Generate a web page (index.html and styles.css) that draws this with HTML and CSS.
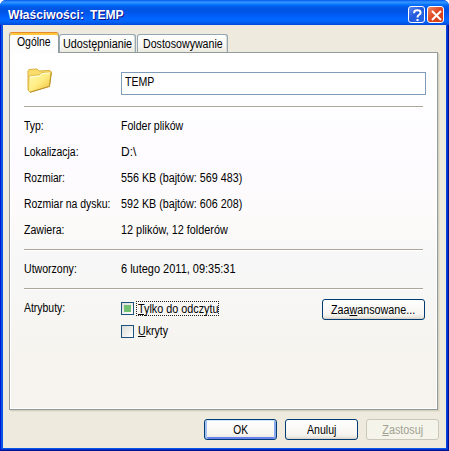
FILE: index.html
```html
<!DOCTYPE html>
<html lang="pl">
<head>
<meta charset="utf-8">
<title>Właściwości: TEMP</title>
<link rel="stylesheet" href="styles.css">
</head>
<body>
<div class="window">
  <header class="titlebar">
    <h1><span class="w-title">Właściwości: TEMP</span></h1>
    <button class="cap help" aria-label="Pomoc"><svg width="17" height="17" viewBox="0 0 17 17"><path d="M5.2 6.2V5.3Q5.2 3.3 8.3 3.3Q11.6 3.3 11.6 5.7Q11.6 7 9.8 8Q8.5 8.8 8.5 10.4M8.5 12V14" /></svg></button>
    <button class="cap close" aria-label="Zamknij"><svg width="17" height="17" viewBox="0 0 17 17"><path d="M4 4L13 13M13 4L4 13" /></svg></button>
  </header>
  <main class="client">
    <nav class="tabs">
      <div class="tab active"><span class="t-ogolne">Ogólne</span></div>
      <div class="tab share"><span class="t-share">Udostępnianie</span></div>
      <div class="tab custom"><span class="t-custom">Dostosowywanie</span></div>
    </nav>
    <section class="panel">
      <div class="name-row">
        <svg class="folder" width="26" height="26" viewBox="0 0 26 26">
          <defs><linearGradient id="front" x1="0" y1="0" x2="1" y2="1"><stop offset="0" stop-color="#fffbb5"/><stop offset=".5" stop-color="#ffed83"/><stop offset="1" stop-color="#edbb37"/></linearGradient></defs>
          <path d="M1 3L2 1.500L10 1L12 3L23 2.500L24.500 4L22 18L3 24L1 22Z" fill="#f9dd6c" stroke="#dcb03a"/>
          <path d="M2 9Q2 7.500 4 7.500L12 7L15 4.500L24 4L22.500 18L3.500 24L1.500 23Z" fill="url(#front)" stroke="#deb340" stroke-width=".8"/>
          <path d="M3 9L12.500 8L15.500 5.500L23 5" fill="none" stroke="#fffde0"/>
          <path d="M3 24.300L22.500 18.500L24.300 5" fill="none" stroke="#b8912c"/>
        </svg>
        <div class="field"><span class="w-temp">TEMP</span></div>
      </div>
      <hr>
      <dl class="facts">
        <dt><span class="w-typ">Typ:</span></dt><dd><span class="w-folder">Folder plików</span></dd>
        <dt><span class="w-lok">Lokalizacja:</span></dt><dd><span class="w-d">D:\</span></dd>
        <dt><span class="w-roz">Rozmiar:</span></dt><dd><span class="w-size">556 KB (bajtów: 569 483)</span></dd>
        <dt><span class="w-disk">Rozmiar na dysku:</span></dt><dd><span class="w-size">592 KB (bajtów: 606 208)</span></dd>
        <dt><span class="w-zaw">Zawiera:</span></dt><dd><span class="w-count">12 plików, 12 folderów</span></dd>
      </dl>
      <hr>
      <dl class="facts single">
        <dt><span class="w-utw">Utworzony:</span></dt><dd><span class="w-date">6 lutego 2011, 09:35:31</span></dd>
      </dl>
      <hr>
      <div class="attributes">
        <div class="attr-label"><span class="w-atr">Atrybuty:</span></div>
        <div class="checks">
          <label class="check"><i class="box mixed"></i><b class="caption focus"><span class="w-read"><u>T</u>ylko do odczytu</span></b></label>
          <label class="check"><i class="box"></i><b class="caption"><span class="w-hid"><u>U</u>kryty</span></b></label>
        </div>
        <button class="btn advanced"><span class="w-adv">Zaa<u>w</u>ansowane...</span></button>
      </div>
    </section>
    <footer class="actions">
      <button class="btn default"><span class="w-ok">OK</span></button>
      <button class="btn"><span class="w-cancel">Anuluj</span></button>
      <button class="btn disabled" disabled><span class="w-apply"><u>Z</u>astosuj</span></button>
    </footer>
  </main>
</div>
</body>
</html>
```

FILE: styles.css
```css
* { box-sizing: border-box; }
body { margin: 0; background: #fff; overflow: hidden; font: 12px/14px "Liberation Sans", Arial, sans-serif; color: #000; }
button { font: inherit; color: inherit; padding: 0; margin: 0; }
span { display: inline-block; white-space: nowrap; transform-origin: 0 50%; }
u { text-decoration: underline; text-underline-offset: 1px; text-decoration-thickness: 1px; }
.window { position: relative; width: 449px; height: 451px; display: flex; flex-direction: column; background: #0831d9; border-radius: 6px 6px 0 0; overflow: hidden; }
.window::after { content: ""; position: absolute; inset: 25px 0 0; pointer-events: none; box-shadow: inset 1px 0 #0019cf, inset -1px -1px #00138c, inset -2px -2px #0030c8, inset 3px -3px #0855e8, inset -3px 0 #0845e0; }
.titlebar { height: 25px; flex: none; display: flex; align-items: center; padding: 3px 5px 0 8px; background: linear-gradient(#0058ee 0, #3593ff 2px, #288eff 3px, #127dff 4px, #036ffc 5px, #0262ee 6px, #0057e5 8px, #0054e3 11px, #005bf5 15px, #0266fe 19px, #0066ff 21px, #005be8 23px, #0048dc 25px); }
h1 { margin: 0 auto 0 0; color: #fff; font: bold 13px/17px "Liberation Sans", Arial, sans-serif; text-shadow: 1px 1px #0f1089; white-space: nowrap; word-spacing: 3px; }
.cap { width: 17px; height: 17px; margin-left: 2px; border: 1px solid #fff; border-radius: 3px; display: grid; place-items: center; overflow: hidden; }
.cap svg { display: block; flex: none; fill: none; stroke: #fff; stroke-width: 2; }
.help { background: linear-gradient(135deg, #5c8aef, #2459dc 45%, #2467e8); }
.close { background: linear-gradient(135deg, #ee8a68, #e04a24 45%, #d03c14); }
.client { width: 449px; height: 426px; padding: 7px 8px 0 6px; border: solid #0831d9; border-width: 0 3px 3px; background: #eeeadd; }
.tabs { height: 20px; display: flex; align-items: flex-end; position: relative; }
.tab { height: 18px; border: 1px solid #91a7b4; border-bottom: 0; border-radius: 3px 3px 0 0; background: linear-gradient(#fff, #f7f6f2 65%, #ece9df); padding: 2px 0 0 3px; box-shadow: inset -1px 0 #dedbd0; }
.tab.active { width: 50px; height: 21px; margin-bottom: -1px; background: #fdfdfe; border: 1px solid #919b9c; border-top: 1px solid #e68b2c; border-bottom: 0; padding: 2px 0 0 7px; box-shadow: inset 0 2px #ffc73c; }
.share { width: 77px; }
.custom { width: 91px; margin-left: 1px; padding-left: 5px; }
.panel { width: 429px; height: 358px; border: 1px solid #919b9c; background: linear-gradient(#fff, #fdfbff 30%, #fcfaf9 48%, #f7f7f7 58%, #f7f7f6 66%, #f6f4ef 83%, #f6f3ee); box-shadow: inset 0 0 0 1px #fff, 1px 1px #d6d2c2, 2px 2px #e4dfcf; padding: 0 11px 0 14px; }
.name-row { height: 53px; padding-top: 14px; display: flex; }
.folder { margin: 1px 0 0 3px; flex: none; }
.field { width: 305px; height: 23px; margin: 5px 0 0 68px; border: 1px solid #7f9db9; background: #fff; padding: 2px 0 0 3px; }
hr { width: 399px; height: 2px; margin: 0; border: 0; border-top: 1px solid #aca899; border-bottom: 1px solid #fff; }
.facts { margin: 0; height: 141px; padding-top: 5px; display: grid; grid-template-columns: 97px 1fr; grid-auto-rows: 26px; align-items: center; }
.facts.single { height: 37px; }
dt, dd { margin: 0; }
.attributes { display: flex; }
.attr-label { width: 97px; padding-top: 11px; }
.checks { width: 201px; padding-top: 12px; }
.check { height: 13px; margin-bottom: 10px; display: flex; align-items: center; }
.box { width: 13px; height: 13px; border: 1px solid #1c5180; background: linear-gradient(135deg, #dcdcd7, #fff); flex: none; }
.mixed { padding: 2px; }
.mixed::before { content: ""; display: block; width: 7px; height: 7px; background: #73c073; }
.caption { width: 83px; height: 15px; margin-left: 2px; padding: 0 1px; border: 1px solid transparent; line-height: 13px; font-weight: normal; }
.focus { border: 1px dotted #222; line-height: 15px; }
.btn { width: 73px; height: 21px; border: 1px solid #003c74; border-radius: 3px; background: linear-gradient(#fff, #f6f5f1 75%, #ece9e2 90%, #d6d0c5); line-height: 17px; padding-top: 1px; }
.btn span { transform-origin: 50% 50%; }
.advanced { width: 103px; margin-top: 9px; }
.default { box-shadow: inset 0 1px #cee7ff, inset 2px 0 #a3c2f3, inset -2px 0 #8aa9ed, inset 0 -2px #6982ee; }
.disabled { color: #a1a192; border-color: #c9c7ba; background: #f5f4ea; }
.actions { display: flex; justify-content: flex-end; gap: 8px; padding-top: 9px; margin-right: -1px; }

/* Condensed label widths */
.w-title { transform: scaleX(.93); }
.t-ogolne, .w-typ, .w-lok, .w-atr { transform: scaleX(.87); }
.t-share, .w-apply { transform: scaleX(.9); }
.t-custom { transform: scaleX(.885); }
.w-temp, .w-folder, .w-zaw, .w-utw, .w-hid, .w-cancel { transform: scaleX(.88); }
.w-roz, .w-ok { transform: scaleX(.85); }
.w-disk { transform: scaleX(.87); }
.w-size, .w-adv { transform: scaleX(.895); }
.w-count { transform: scaleX(.905); }
.w-date { transform: scaleX(.915); }
.w-read { transform: scaleX(.9); }
```
